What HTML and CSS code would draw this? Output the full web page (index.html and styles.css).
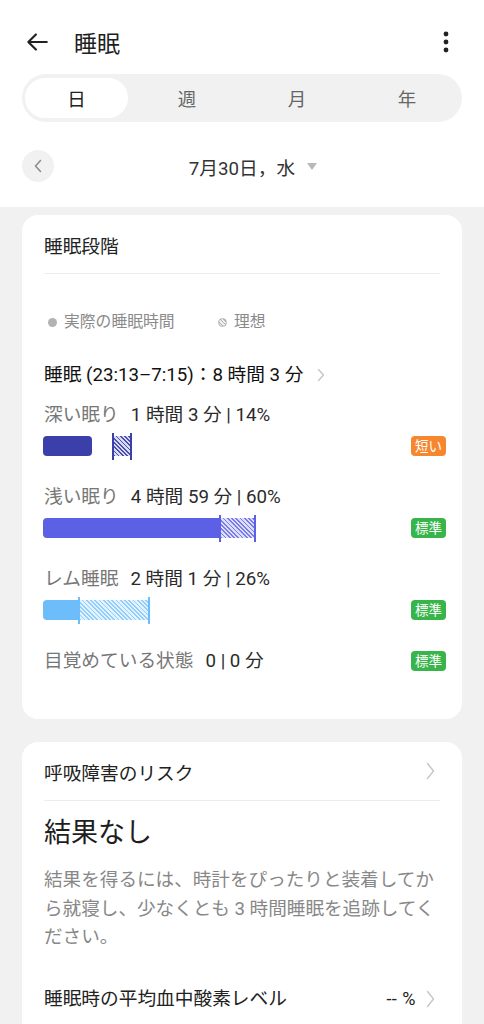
FILE: index.html
```html
<!DOCTYPE html>
<html lang="ja">
<head>
    <meta charset="UTF-8">
    <meta name="viewport" content="width=device-width, initial-scale=1.0">
    <title>睡眠</title>
    <link rel="stylesheet" href="styles.css">
</head>
<body>
    <header class="top">
        <div class="appbar">
            <svg class="back" viewBox="0 0 24 24" width="26" height="26">
                <path d="M21 12H4M11 5l-7 7 7 7" fill="none" stroke="#222" stroke-width="2" stroke-linecap="round" stroke-linejoin="round"/>
            </svg>
            <h1 class="title">睡眠</h1>
            <svg class="more" viewBox="0 0 6 22" width="6" height="22">
                <circle cx="3" cy="3" r="2.4" fill="#222"/>
                <circle cx="3" cy="11" r="2.4" fill="#222"/>
                <circle cx="3" cy="19" r="2.4" fill="#222"/>
            </svg>
        </div>

        <nav class="tabs">
            <span class="tab active"><span>日</span></span>
            <span class="tab"><span>週</span></span>
            <span class="tab"><span>月</span></span>
            <span class="tab"><span>年</span></span>
        </nav>

        <div class="date-row">
            <button class="prev">
                <svg viewBox="0 0 8 14" width="8" height="14">
                    <path d="M6.5 1.5L1.5 7l5 5.5" fill="none" stroke="#8a8a8a" stroke-width="1.5" stroke-linecap="round" stroke-linejoin="round"/>
                </svg>
            </button>
            <div class="date">7月30日，水<span class="caret"></span></div>
        </div>
    </header>

    <main class="content">
        <!-- 睡眠段階 -->
        <section class="card">
            <div class="card-head">睡眠段階</div>

            <div class="legend">
                <span class="legend-item"><i class="dot"></i>実際の睡眠時間</span>
                <span class="legend-item"><i class="dot ideal"></i>理想</span>
            </div>

            <div class="summary">
                睡眠 (23:13–7:15)：8 時間 3 分
                <svg class="chev" viewBox="0 0 8 14" width="8" height="14">
                    <path d="M1.5 1.5L6.5 7l-5 5.5" fill="none" stroke="#c4c4c4" stroke-width="1.3" stroke-linecap="round" stroke-linejoin="round"/>
                </svg>
            </div>

            <div class="stage">
                <div class="stage-label">深い眠り<span class="value">1 時間 3 分 | 14%</span></div>
                <div class="bar-row">
                    <div class="track">
                        <span class="solid deep" style="width: 49px"></span>
                        <span class="hatch deep" style="width: 20px; margin-left: 20px"></span>
                    </div>
                    <span class="badge short">短い</span>
                </div>
            </div>

            <div class="stage">
                <div class="stage-label">浅い眠り<span class="value">4 時間 59 分 | 60%</span></div>
                <div class="bar-row">
                    <div class="track">
                        <span class="solid light joined" style="width: 176px"></span>
                        <span class="hatch light" style="width: 37px"></span>
                    </div>
                    <span class="badge ok">標準</span>
                </div>
            </div>

            <div class="stage">
                <div class="stage-label">レム睡眠<span class="value">2 時間 1 分 | 26%</span></div>
                <div class="bar-row">
                    <div class="track">
                        <span class="solid rem joined" style="width: 35px"></span>
                        <span class="hatch rem" style="width: 72px"></span>
                    </div>
                    <span class="badge ok">標準</span>
                </div>
            </div>

            <div class="stage awake">
                <div class="stage-label">目覚めている状態<span class="value">0 | 0 分</span></div>
                <span class="badge ok">標準</span>
            </div>
        </section>

        <!-- 呼吸障害のリスク -->
        <section class="card">
            <div class="card-head">
                呼吸障害のリスク
                <svg class="chev end" viewBox="0 0 9 18" width="9" height="18">
                    <path d="M1.5 1.5L7.5 9l-6 7.5" fill="none" stroke="#c4c4c4" stroke-width="1.3" stroke-linecap="round" stroke-linejoin="round"/>
                </svg>
            </div>
            <div class="result">結果なし</div>
            <p class="note">結果を得るには、時計をぴったりと装着してから就寝し、少なくとも 3 時間睡眠を追跡してください。</p>
            <div class="metric">
                <span>睡眠時の平均血中酸素レベル</span>
                <span class="metric-value">-- %
                    <svg class="chev" viewBox="0 0 9 18" width="9" height="18">
                        <path d="M1.5 1.5L7.5 9l-6 7.5" fill="none" stroke="#c4c4c4" stroke-width="1.3" stroke-linecap="round" stroke-linejoin="round"/>
                    </svg>
                </span>
            </div>
        </section>
    </main>
</body>
</html>
```

FILE: styles.css
```css
* {
    box-sizing: border-box;
    margin: 0;
    padding: 0;
}

body {
    font-family: Roboto, "Noto Sans CJK JP", sans-serif;
    background-color: #f1f1f1;
    color: #222;
}

/* Cabecera blanca */
.top {
    background-color: white;
    padding: 18px 22px 25px;
}

.appbar {
    display: flex;
    align-items: center;
    height: 48px;
}

.back {
    margin-left: 2px;
}

.title {
    flex: 1;
    margin-left: 24px;
    font-size: 23px;
    font-weight: 400;
    color: #1e1e1e;
}

.more {
    margin-right: 13px;
}

.tabs {
    display: grid;
    grid-template-columns: repeat(4, 1fr);
    height: 48px;
    margin-top: 8px;
    background-color: #f1f1f1;
    border-radius: 24px;
}

.tab {
    display: flex;
    align-items: center;
    justify-content: center;
    font-size: 18.5px;
    color: #666;
}

.tab.active {
    margin: 4px 4px 4px 3px;
    background-color: white;
    border-radius: 20px;
    color: #222;
}

.date-row {
    display: grid;
    grid-template-columns: 32px 1fr 32px;
    align-items: center;
    margin-top: 28px;
}

.prev {
    width: 32px;
    height: 32px;
    border: none;
    border-radius: 50%;
    background-color: #f1f1f1;
    display: flex;
    align-items: center;
    justify-content: center;
}

.date {
    display: flex;
    align-items: center;
    justify-content: center;
    font-size: 18.7px;
    color: #333;
    padding-left: 22px;
}

.caret {
    width: 0;
    height: 0;
    margin-left: 12px;
    border-left: 5px solid transparent;
    border-right: 5px solid transparent;
    border-top: 7px solid #b8b8b8;
}

/* Tarjetas */
.content {
    padding: 8px 22px;
}

.card {
    background-color: white;
    border-radius: 16px;
    padding: 0 22px;
    margin-bottom: 23px;
}

.card:first-child {
    padding-bottom: 46px;
}

.card-head {
    display: flex;
    align-items: center;
    justify-content: space-between;
    height: 59px;
    border-bottom: 1px solid #ededed;
    font-size: 18.7px;
    color: #222;
}

.chev.end {
    margin-right: 5px;
}

.legend {
    display: flex;
    margin-top: 36px;
    line-height: 24px;
    font-size: 15.8px;
    color: #8a8a8a;
}

.legend-item {
    display: flex;
    align-items: center;
    width: 170px;
}

.dot {
    width: 9px;
    height: 9px;
    margin: 0 7px 0 4px;
    border-radius: 50%;
    background-color: #b3b3b3;
}

.dot.ideal {
    border: 1px solid #b3b3b3;
    background: repeating-linear-gradient(45deg, #b3b3b3 0 1px, #eee 1px 2.5px);
}

.summary {
    display: flex;
    align-items: center;
    margin-top: 29px;
    line-height: 24px;
    font-size: 18.7px;
    color: #111;
}

.summary .chev {
    margin-left: 14px;
}

.stage {
    margin-top: 25px;
}

.summary + .stage {
    margin-top: 16px;
}

.stage-label {
    line-height: 24px;
    font-size: 18.7px;
    color: #777;
}

.value {
    margin-left: 12px;
    color: #2b2b2b;
}

.bar-row {
    display: flex;
    align-items: center;
    height: 28px;
    margin-top: 5px;
}

.track {
    flex: 1;
    display: flex;
    align-items: center;
    margin-left: -1px;
}

.solid {
    height: 20px;
    border-radius: 4px;
}

.solid.joined {
    border-radius: 4px 0 0 4px;
}

.hatch {
    height: 27px;
    border-left: 2px solid;
    border-right: 2px solid;
    background-position: center;
    background-size: 100% 20px;
    background-repeat: no-repeat;
}

.deep { background-color: #3b3fa9; }
.light { background-color: #5b60e4; }
.rem { background-color: #6cbdf9; }

.hatch.deep {
    border-color: #3b3fa9;
    background-color: transparent;
    background-image: repeating-linear-gradient(45deg, #4a4fb3 0 1.2px, #d8d9ef 1.2px 3px);
}

.hatch.light {
    border-color: #5b60e4;
    background-color: transparent;
    background-image: repeating-linear-gradient(45deg, #777ce9 0 1.2px, #dcddfa 1.2px 3px);
}

.hatch.rem {
    border-color: #6cbdf9;
    background-color: transparent;
    background-image: repeating-linear-gradient(45deg, #8fcdfa 0 1.2px, #e2f2fe 1.2px 3px);
}

.badge {
    margin-right: -6px;
    padding: 0 4px;
    height: 20px;
    line-height: 20px;
    border-radius: 4px;
    font-size: 13.5px;
    color: white;
}

.badge.short { background-color: #f6872e; }
.badge.ok { background-color: #37b44a; }

.stage.awake {
    display: flex;
    align-items: center;
    justify-content: space-between;
}

.result {
    margin-top: 14px;
    line-height: 36px;
    font-size: 27px;
    color: #1e1e1e;
}

.note {
    margin-top: 15px;
    line-height: 28.5px;
    font-size: 18.6px;
    color: #888;
}

.metric {
    display: flex;
    align-items: center;
    justify-content: space-between;
    margin-top: 35px;
    line-height: 24px;
    font-size: 18.7px;
    color: #222;
    padding-bottom: 30px;
}

.metric-value {
    display: flex;
    align-items: center;
    font-size: 18px;
    letter-spacing: 0.5px;
}

.metric-value .chev {
    margin: 0 5px 0 10px;
}
```
